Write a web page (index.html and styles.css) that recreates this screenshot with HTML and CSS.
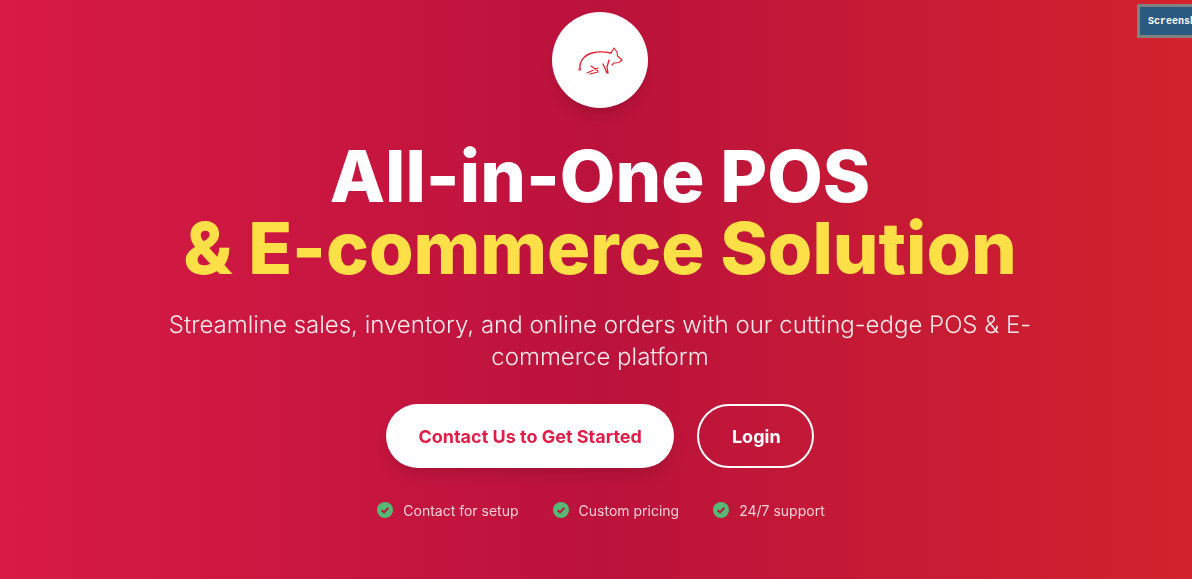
FILE: index.html
```html
<!DOCTYPE html>
<html lang="en">
<head>
  <meta charset="UTF-8">
  <meta name="viewport" content="width=device-width, initial-scale=1.0">
  <title>All-in-One POS & E-commerce Solution</title>
  <link rel="stylesheet" href="styles.css">
</head>
<body>

  <section class="hero">
    <div class="logo">
      <svg width="60" height="40" viewBox="0 0 60 40" fill="none" stroke="#e6202e" stroke-linecap="round" stroke-linejoin="round">
        <path d="M10 29 C9 22 14 15 22 13 C29 11 36 12 41 13" stroke-width="1.400"/>
        <circle cx="9.500" cy="29.500" r="1" stroke-width="0.800"/>
        <path d="M41 13 L44 8 L47 12 L47.500 16 L52 20 L49 22.500 L44 23 L42 25" stroke-width="1.100"/>
        <path d="M33 24 L37 33 M39 20 L37 27 L38 33" stroke-width="1.300"/>
        <path d="M21 26 L28 31 M17 33 L28 28 M20 34 L28 32" stroke-width="1.200"/>
      </svg>
    </div>

    <h1>All-in-One POS<br><span class="accent">& E-commerce Solution</span></h1>

    <p class="lead">Streamline sales, inventory, and online orders with our cutting-edge POS & E-commerce platform</p>

    <div class="actions">
      <a class="btn btn-primary" href="#">Contact Us to Get Started</a>
      <a class="btn btn-outline" href="#">Login</a>
    </div>

    <ul class="perks">
      <li>
        <svg class="check" width="16" height="16" viewBox="0 0 16 16"><circle cx="8" cy="8" r="8" fill="#55b873"/><path d="M4.600 8.100 L7 10.400 L11.400 5.900" fill="none" stroke="#be123c" stroke-width="2"/></svg>
        Contact for setup
      </li>
      <li>
        <svg class="check" width="16" height="16" viewBox="0 0 16 16"><circle cx="8" cy="8" r="8" fill="#55b873"/><path d="M4.600 8.100 L7 10.400 L11.400 5.900" fill="none" stroke="#be123c" stroke-width="2"/></svg>
        Custom pricing
      </li>
      <li>
        <svg class="check" width="16" height="16" viewBox="0 0 16 16"><circle cx="8" cy="8" r="8" fill="#55b873"/><path d="M4.600 8.100 L7 10.400 L11.400 5.900" fill="none" stroke="#be123c" stroke-width="2"/></svg>
        24/7 support
      </li>
    </ul>
  </section>

  <div class="shot-tab">Screenshot</div>

</body>
</html>
```

FILE: styles.css
```css
html, body {
  margin: 0;
  height: 100%;
  overflow: hidden;
}
body {
  font-family: Inter, "Liberation Sans", sans-serif;
  color: #fff;
}
.hero {
  width: 1200px;
  height: 579px;
  padding-top: 12px;
  box-sizing: border-box;
  display: flex;
  flex-direction: column;
  align-items: center;
  text-align: center;
  background: linear-gradient(to right, #d81b45, #bb123c, #d2232d);
}
.logo {
  width: 96px;
  height: 96px;
  border-radius: 50%;
  background: #fff;
  display: flex;
  align-items: center;
  justify-content: center;
  box-shadow: 0 10px 15px -3px rgba(0, 0, 0, 0.1), 0 4px 6px -4px rgba(0, 0, 0, 0.1);
}
h1, .lead, .actions, .perks {
  will-change: opacity;
}
h1 {
  margin: 32px 0 0;
  font-size: 72px;
  line-height: 72px;
  font-weight: 800;
}
.accent {
  color: #fde047;
}
.lead {
  margin: 25px 0 0;
  max-width: 896px;
  font-size: 24px;
  line-height: 32px;
  font-weight: 300;
  color: rgba(255, 255, 255, 0.9);
  text-rendering: geometricPrecision;
}
.actions {
  margin-top: 31px;
  display: flex;
  gap: 23px;
}
.btn {
  height: 64px;
  box-sizing: border-box;
  display: flex;
  align-items: center;
  border-radius: 32px;
  font-size: 18px;
  font-weight: 700;
  text-decoration: none;
}
.btn-primary {
  padding: 0 32px;
  background: #fff;
  color: #e11d48;
  box-shadow: 0 10px 15px -3px rgba(0, 0, 0, 0.1), 0 4px 6px -4px rgba(0, 0, 0, 0.1);
}
.btn-outline {
  padding: 0 31px 0 33px;
  border: 2px solid #fff;
  color: #fff;
}
.perks {
  list-style: none;
  margin: 33px 0 0;
  padding: 0 0 0 2px;
  display: flex;
  gap: 34px;
  font-size: 14px;
  line-height: 20px;
  color: rgba(255, 255, 255, 0.8);
}
.perks li {
  display: flex;
  align-items: center;
  gap: 10px;
}
.check {
  margin-bottom: 2px;
}
.shot-tab {
  position: fixed;
  top: 4px;
  left: 1137px;
  width: 100px;
  height: 34px;
  box-sizing: border-box;
  padding-left: 8px;
  border: 3px solid #808080;
  background: #2b5a80;
  color: #fff;
  font-family: "Liberation Mono", monospace;
  font-size: 10px;
  font-weight: 700;
  line-height: 30px;
}
```
